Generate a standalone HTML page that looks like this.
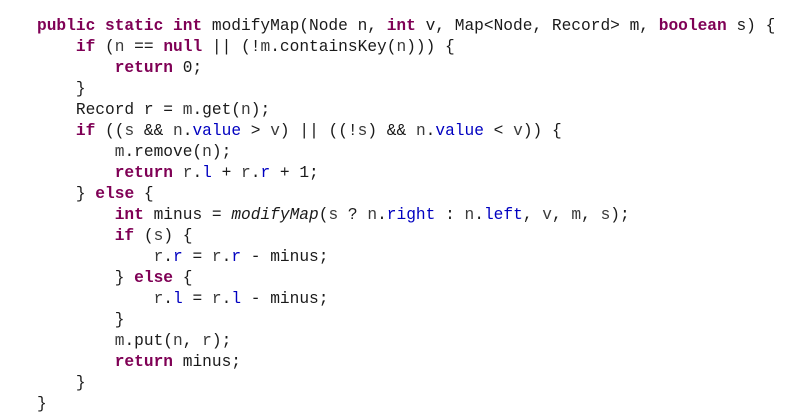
<!DOCTYPE html>
<html><head><meta charset="utf-8"><style>
html,body{margin:0;padding:0;background:#fff;width:799px;height:419px;overflow:hidden}
pre{margin:0;position:absolute;left:37px;top:16px;font-family:"Liberation Mono",monospace;font-size:16.2px;line-height:21px;color:#1a1a1a}
.k{color:#7f0055;font-weight:bold}
.f{color:#0000c0}
.i{font-style:italic}
.v{color:#3a3a3a}
</style></head><body><pre><span class="k">public static int</span> modifyMap(Node n, <span class="k">int</span> v, Map&lt;Node, Record&gt; m, <span class="k">boolean</span> s) {
    <span class="k">if</span> (<span class="v">n</span> == <span class="k">null</span> || (!<span class="v">m</span>.containsKey(<span class="v">n</span>))) {
        <span class="k">return</span> 0;
    }
    Record r = <span class="v">m</span>.get(<span class="v">n</span>);
    <span class="k">if</span> ((<span class="v">s</span> &amp;&amp; <span class="v">n</span>.<span class="f">value</span> &gt; <span class="v">v</span>) || ((!<span class="v">s</span>) &amp;&amp; <span class="v">n</span>.<span class="f">value</span> &lt; <span class="v">v</span>)) {
        <span class="v">m</span>.remove(<span class="v">n</span>);
        <span class="k">return</span> <span class="v">r</span>.<span class="f">l</span> + <span class="v">r</span>.<span class="f">r</span> + 1;
    } <span class="k">else</span> {
        <span class="k">int</span> minus = <span class="i">modifyMap</span>(<span class="v">s</span> ? <span class="v">n</span>.<span class="f">right</span> : <span class="v">n</span>.<span class="f">left</span>, <span class="v">v</span>, <span class="v">m</span>, <span class="v">s</span>);
        <span class="k">if</span> (<span class="v">s</span>) {
            <span class="v">r</span>.<span class="f">r</span> = <span class="v">r</span>.<span class="f">r</span> - minus;
        } <span class="k">else</span> {
            <span class="v">r</span>.<span class="f">l</span> = <span class="v">r</span>.<span class="f">l</span> - minus;
        }
        <span class="v">m</span>.put(<span class="v">n</span>, <span class="v">r</span>);
        <span class="k">return</span> minus;
    }
}</pre></body></html>
